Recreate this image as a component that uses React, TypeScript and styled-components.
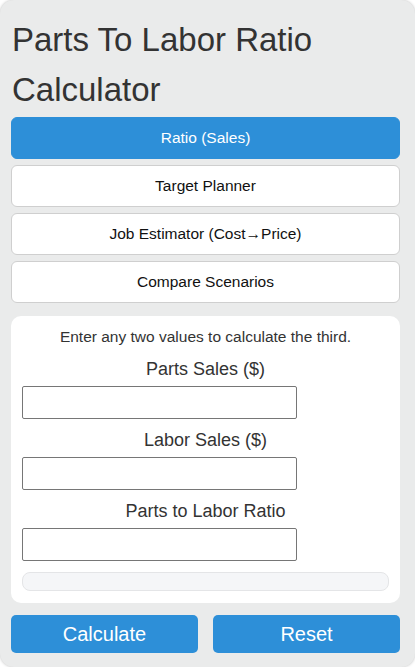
import React, { useState } from "react";
import styled, { createGlobalStyle } from "styled-components";

const GlobalStyle = createGlobalStyle`
  html, body {
    margin: 0;
    padding: 0;
    background: #ffffff;
  }
  body {
    font-family: "Liberation Sans", Arial, sans-serif;
    color: #333333;
  }
`;

const Page = styled.main`
  box-sizing: border-box;
  width: 415px;
  min-height: 667px;
  background: #eaebeb;
  border-radius: 14px;
  box-shadow: 0 0 3px rgba(0, 0, 0, 0.25);
  padding: 12px 15px 14px 11px;
`;

const Title = styled.h1`
  margin: 3px 0 2px 1px;
  font-size: 33px;
  font-weight: normal;
  line-height: 50px;
  color: #333333;
`;

const Tabs = styled.nav`
  display: flex;
  flex-direction: column;
  gap: 6px;
`;

const Tab = styled.button<{ $active?: boolean }>`
  box-sizing: border-box;
  width: 100%;
  height: 42px;
  border-radius: 6px;
  border: 1px solid ${(p) => (p.$active ? "#2d8fd8" : "#cfcfcf")};
  background: ${(p) => (p.$active ? "#2d8fd8" : "#ffffff")};
  color: ${(p) => (p.$active ? "#ffffff" : "#111111")};
  font-family: inherit;
  font-size: 15.5px;
  cursor: pointer;
`;

const Card = styled.section`
  margin-top: 13px;
  background: #ffffff;
  border-radius: 10px;
  padding: 12px 11px 12px 11px;
  display: flex;
  flex-direction: column;
`;

const Intro = styled.p`
  margin: 0 0 13px;
  text-align: center;
  font-size: 15.5px;
  line-height: 18px;
  color: #333333;
`;

const Field = styled.div`
  display: flex;
  flex-direction: column;
  margin-bottom: 11px;
`;

const Label = styled.label`
  display: block;
  text-align: center;
  font-size: 18px;
  line-height: 21px;
  margin-bottom: 6px;
  color: #333333;
`;

const Input = styled.input`
  box-sizing: border-box;
  width: 75%;
  height: 33px;
  border: 1px solid #767676;
  border-radius: 2px;
  font-family: inherit;
  font-size: 16px;
  padding: 0 6px;
`;

const Result = styled.div`
  box-sizing: border-box;
  height: 19px;
  background: #f5f6f8;
  border: 1px solid #e4e5e7;
  border-radius: 8px;
`;

const Actions = styled.div`
  display: grid;
  grid-template-columns: 1fr 1fr;
  gap: 15px;
  margin-top: 12px;
`;

const ActionButton = styled.button`
  height: 38px;
  border: none;
  border-radius: 5px;
  background: #2d8fd8;
  color: #ffffff;
  font-family: inherit;
  font-size: 20px;
  cursor: pointer;
`;

const tabs = ["Ratio (Sales)", "Target Planner", "Job Estimator (Cost\u2192Price)", "Compare Scenarios"];

export default function App() {
  const [active, setActive] = useState(0);
  const [parts, setParts] = useState("");
  const [labor, setLabor] = useState("");
  const [ratio, setRatio] = useState("");

  const reset = () => {
    setParts("");
    setLabor("");
    setRatio("");
  };

  return (
    <>
      <GlobalStyle />
      <Page>
        <Title>Parts To Labor Ratio Calculator</Title>
        <Tabs>
          {tabs.map((t, i) => (
            <Tab key={t} $active={i === active} onClick={() => setActive(i)}>
              {t}
            </Tab>
          ))}
        </Tabs>
        <Card>
          <Intro>Enter any two values to calculate the third.</Intro>
          <Field>
            <Label htmlFor="parts">Parts Sales ($)</Label>
            <Input id="parts" value={parts} onChange={(e) => setParts(e.target.value)} />
          </Field>
          <Field>
            <Label htmlFor="labor">Labor Sales ($)</Label>
            <Input id="labor" value={labor} onChange={(e) => setLabor(e.target.value)} />
          </Field>
          <Field>
            <Label htmlFor="ratio">Parts to Labor Ratio</Label>
            <Input id="ratio" value={ratio} onChange={(e) => setRatio(e.target.value)} />
          </Field>
          <Result />
        </Card>
        <Actions>
          <ActionButton>Calculate</ActionButton>
          <ActionButton onClick={reset}>Reset</ActionButton>
        </Actions>
      </Page>
    </>
  );
}
